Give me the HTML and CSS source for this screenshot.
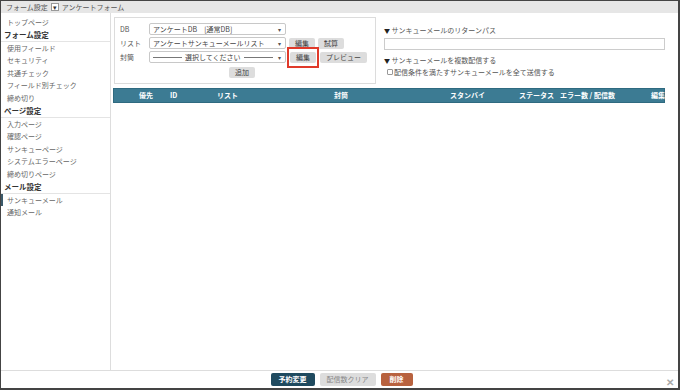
FILE: index.html
```html
<!DOCTYPE html>
<html lang="ja">
<head>
<meta charset="utf-8">
<link rel="stylesheet" href="styles.css">
</head>
<body>
<div class="frame">
  <div class="topbar">
    <span>フォーム設定</span>
    <span class="dd">▾</span>
    <span>アンケートフォーム</span>
  </div>
  <div class="content">
    <nav class="sidebar">
      <div class="item">トップページ</div>
      <div class="sec">フォーム設定</div>
      <div class="item sub">使用フィールド</div>
      <div class="item sub">セキュリティ</div>
      <div class="item sub">共通チェック</div>
      <div class="item sub">フィールド別チェック</div>
      <div class="item sub">締め切り</div>
      <div class="sec">ページ設定</div>
      <div class="item sub">入力ページ</div>
      <div class="item sub">確認ページ</div>
      <div class="item sub">サンキューページ</div>
      <div class="item sub">システムエラーページ</div>
      <div class="item sub">締め切りページ</div>
      <div class="sec">メール設定</div>
      <div class="item sub active">サンキューメール</div>
      <div class="item sub">通知メール</div>
    </nav>
    <main class="main">
      <div class="toprow">
        <div class="box">
          <div class="row">
            <span class="lbl">DB</span>
            <div class="sel"><span>アンケートDB　[通常DB]</span><span class="arr">▾</span></div>
          </div>
          <div class="row">
            <span class="lbl">リスト</span>
            <div class="sel"><span>アンケートサンキューメールリスト</span><span class="arr">▾</span></div>
            <span class="btn">編集</span>
            <span class="btn">試算</span>
          </div>
          <div class="row">
            <span class="lbl">封筒</span>
            <div class="sel"><span class="ph"><i></i>選択してください<i></i></span><span class="arr">▾</span></div>
            <span class="hlwrap"><span class="btn">編集</span></span>
            <span class="btn">プレビュー</span>
          </div>
          <div class="addrow"><span class="btn">追加</span></div>
        </div>
        <div class="side">
          <div class="ttl"><span class="tri">▼</span> サンキューメールのリターンパス</div>
          <div class="inp"></div>
          <div class="ttl t2"><span class="tri">▼</span> サンキューメールを複数配信する</div>
          <label class="chk"><span class="cb"></span>配信条件を満たすサンキューメールを全て送信する</label>
        </div>
      </div>
      <div class="thead">
        <span class="c1">優先</span>
        <span class="c2">ID</span>
        <span class="c3">リスト</span>
        <span class="c4">封筒</span>
        <span class="c5">スタンバイ</span>
        <span class="c6">ステータス</span>
        <span class="c7">エラー数 / 配信数</span>
        <span class="c8">編集</span>
      </div>
    </main>
  </div>
  <div class="footer">
    <span class="fbtn dark">予約変更</span>
    <span class="fbtn gray">配信数クリア</span>
    <span class="fbtn red">削除</span>
    <span class="close">✕</span>
  </div>
</div>
</body>
</html>
```

FILE: styles.css
```css
* { box-sizing: border-box; }
html, body { margin: 0; padding: 0; background: #fff; }
body {
  font-family: "Noto Sans CJK JP", "Noto Sans", sans-serif;
  font-size: 7px;
  color: #555;
}
.frame {
  width: 680px;
  height: 390px;
  border-style: solid;
  border-color: #444;
  border-width: 1px 2px 2px 1px;
  display: flex;
  flex-direction: column;
  position: relative;
}
.topbar {
  height: 12px;
  background: #e6e6e6;
  display: flex;
  align-items: center;
  gap: 3px;
  padding-left: 5px;
  color: #555;
  flex-shrink: 0;
}
.topbar .dd {
  width: 8px; height: 8px;
  background: #fff;
  border: 1px solid #999;
  font-size: 7px;
  line-height: 6px;
  text-align: center;
  color: #333;
}
.content {
  flex: 1;
  display: flex;
  min-height: 0;
}
.sidebar {
  width: 110px;
  border-right: 1px solid #ddd;
  padding-top: 3px;
  flex-shrink: 0;
}
.sidebar .item {
  height: 12.6px;
  line-height: 12.6px;
  padding-left: 6px;
  color: #666;
  white-space: nowrap;
}
.sidebar .sec {
  height: 13px;
  line-height: 12px;
  padding-left: 3px;
  font-weight: bold;
  font-size: 7.5px;
  color: #333;
  border-bottom: 1px solid #e4e4e4;
}
.sidebar .active {
  border-left: 2px solid #3b5a6a;
  padding-left: 4px;
}
.main {
  flex: 1;
  padding: 4px 13px 0 3px;
}
.toprow {
  display: flex;
  gap: 8px;
}
.box {
  width: 262px;
  height: 67px;
  border: 1px solid #dcdcdc;
  padding: 5px 0 0 5px;
  flex-shrink: 0;
}
.row {
  display: flex;
  align-items: center;
  height: 12px;
  margin-bottom: 2px;
  white-space: nowrap;
}
.lbl {
  width: 29px;
  color: #555;
}
.sel {
  width: 137px;
  height: 12px;
  border: 1px solid #c8c8c8;
  border-radius: 2px;
  display: flex;
  justify-content: space-between;
  align-items: center;
  padding: 0 4px 0 3px;
  color: #444;
  margin-right: 3px;
}
.sel .ph {
  display: flex;
  align-items: center;
  gap: 3px;
  color: #444;
}
.sel .ph i {
  display: inline-block;
  width: 29px;
  height: 1px;
  background: #777;
}
.sel .arr { font-size: 6px; color: #555; }
.btn {
  display: inline-block;
  background: #ddd;
  border-radius: 2px;
  height: 11px;
  line-height: 11px;
  padding: 0 6px;
  color: #444;
  margin-right: 3px;
}
.hlwrap {
  display: inline-flex;
  border: 2px solid #e03a2a;
  padding: 3px 1px;
  margin: 0 1px 0 -2px;
}
.hlwrap .btn { margin-right: 0; padding: 0 6px; }
.addrow {
  padding-left: 109px;
  margin-top: 4px;
}
.side {
  flex: 1;
  padding-top: 8px;
}
.ttl {
  color: #555;
  height: 10px;
  line-height: 10px;
}
.tri { color: #222; font-size: 6px; }
.inp {
  height: 12px;
  border: 1px solid #ccc;
  margin-top: 3px;
}
.ttl.t2 { margin-top: 5px; }
.chk {
  display: flex;
  align-items: center;
  margin-top: 2px;
  padding-left: 3px;
  color: #555;
}
.cb {
  width: 6px; height: 6px;
  border: 1px solid #999;
  border-radius: 1px;
  margin-right: 1px;
}
.thead {
  margin-top: 4px;
  margin-left: -1px;
  height: 15px;
  background: #3c7b93;
  border: 1px solid #2f6a80;
  color: #fff;
  font-weight: bold;
  position: relative;
}
.thead span {
  position: absolute;
  top: 0;
  line-height: 13px;
  white-space: nowrap;
}
.thead .c1 { left: 25px; }
.thead .c2 { left: 56px; }
.thead .c3 { left: 103px; }
.thead .c4 { left: 220px; }
.thead .c5 { left: 336px; }
.thead .c6 { left: 405px; }
.thead .c7 { left: 446px; }
.thead .c8 { left: 537px; }
.footer {
  height: 18px;
  border-top: 1px solid #ddd;
  display: flex;
  justify-content: center;
  align-items: center;
  gap: 5px;
  position: relative;
  flex-shrink: 0;
  padding-left: 4px;
}
.fbtn {
  height: 13px;
  line-height: 13px;
  padding: 0 8px;
  border-radius: 2px;
  font-weight: bold;
}
.fbtn.dark { background: #1f4a5f; color: #fff; }
.fbtn.gray { background: #ddd; color: #888; font-weight: normal; padding: 0 7px; }
.fbtn.red { background: #b8623f; color: #fff; padding: 0 9px; }
.close {
  position: absolute;
  right: 4px;
  top: 3px;
  color: #aaa;
  font-size: 10px;
  font-weight: bold;
}
```
